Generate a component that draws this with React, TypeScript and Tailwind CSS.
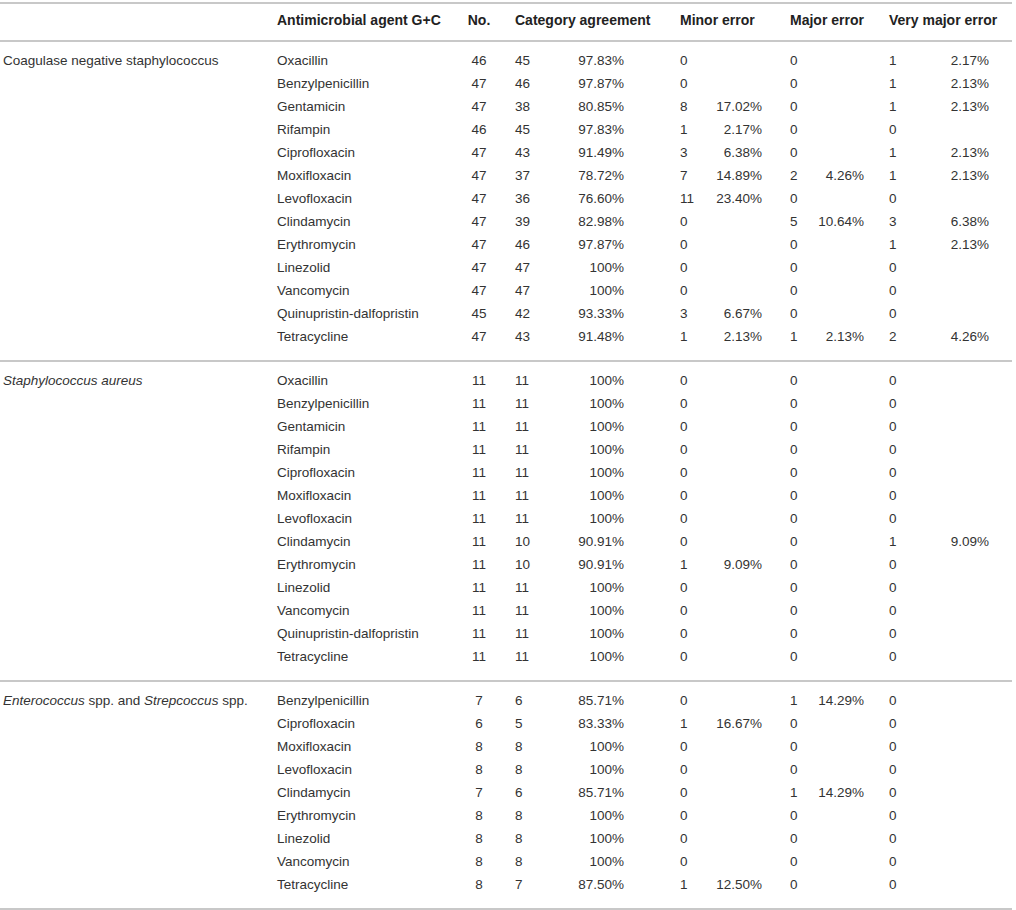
type Cell = [string, string];
type Row = {
  agent: string;
  no: string;
  cat: Cell;
  minor: Cell;
  major: Cell;
  veryMajor: Cell;
};

const r = (
  agent: string,
  no: string,
  cat: Cell,
  minor: Cell = ['0', ''],
  major: Cell = ['0', ''],
  veryMajor: Cell = ['0', '']
): Row => ({ agent, no, cat, minor, major, veryMajor });

const groups: { name: React.ReactNode; rows: Row[] }[] = [
  {
    name: 'Coagulase negative staphylococcus',
    rows: [
      r('Oxacillin', '46', ['45', '97.83%'], ['0', ''], ['0', ''], ['1', '2.17%']),
      r('Benzylpenicillin', '47', ['46', '97.87%'], ['0', ''], ['0', ''], ['1', '2.13%']),
      r('Gentamicin', '47', ['38', '80.85%'], ['8', '17.02%'], ['0', ''], ['1', '2.13%']),
      r('Rifampin', '46', ['45', '97.83%'], ['1', '2.17%'], ['0', ''], ['0', '']),
      r('Ciprofloxacin', '47', ['43', '91.49%'], ['3', '6.38%'], ['0', ''], ['1', '2.13%']),
      r('Moxifloxacin', '47', ['37', '78.72%'], ['7', '14.89%'], ['2', '4.26%'], ['1', '2.13%']),
      r('Levofloxacin', '47', ['36', '76.60%'], ['11', '23.40%'], ['0', ''], ['0', '']),
      r('Clindamycin', '47', ['39', '82.98%'], ['0', ''], ['5', '10.64%'], ['3', '6.38%']),
      r('Erythromycin', '47', ['46', '97.87%'], ['0', ''], ['0', ''], ['1', '2.13%']),
      r('Linezolid', '47', ['47', '100%']),
      r('Vancomycin', '47', ['47', '100%']),
      r('Quinupristin-dalfopristin', '45', ['42', '93.33%'], ['3', '6.67%']),
      r('Tetracycline', '47', ['43', '91.48%'], ['1', '2.13%'], ['1', '2.13%'], ['2', '4.26%']),
    ],
  },
  {
    name: <i>Staphylococcus aureus</i>,
    rows: [
      r('Oxacillin', '11', ['11', '100%']),
      r('Benzylpenicillin', '11', ['11', '100%']),
      r('Gentamicin', '11', ['11', '100%']),
      r('Rifampin', '11', ['11', '100%']),
      r('Ciprofloxacin', '11', ['11', '100%']),
      r('Moxifloxacin', '11', ['11', '100%']),
      r('Levofloxacin', '11', ['11', '100%']),
      r('Clindamycin', '11', ['10', '90.91%'], ['0', ''], ['0', ''], ['1', '9.09%']),
      r('Erythromycin', '11', ['10', '90.91%'], ['1', '9.09%']),
      r('Linezolid', '11', ['11', '100%']),
      r('Vancomycin', '11', ['11', '100%']),
      r('Quinupristin-dalfopristin', '11', ['11', '100%']),
      r('Tetracycline', '11', ['11', '100%']),
    ],
  },
  {
    name: (
      <>
        <i>Enterococcus</i> spp. and <i>Strepcoccus</i> spp.
      </>
    ),
    rows: [
      r('Benzylpenicillin', '7', ['6', '85.71%'], ['0', ''], ['1', '14.29%']),
      r('Ciprofloxacin', '6', ['5', '83.33%'], ['1', '16.67%']),
      r('Moxifloxacin', '8', ['8', '100%']),
      r('Levofloxacin', '8', ['8', '100%']),
      r('Clindamycin', '7', ['6', '85.71%'], ['0', ''], ['1', '14.29%']),
      r('Erythromycin', '8', ['8', '100%']),
      r('Linezolid', '8', ['8', '100%']),
      r('Vancomycin', '8', ['8', '100%']),
      r('Tetracycline', '8', ['7', '87.50%'], ['1', '12.50%']),
    ],
  },
];

function Pair({ cell, className }: { cell: Cell; className: string }) {
  return (
    <div className={`flex shrink-0 justify-between ${className}`}>
      <span>{cell[0]}</span>
      <span>{cell[1]}</span>
    </div>
  );
}

export default function App() {
  return (
    <div className="min-h-screen bg-white pt-[2px] font-['Liberation_Sans',Arial,sans-serif] text-[13.5px] text-[#333]">
      <div className="w-[1012px] border-t-2 border-[#c8c8c8]">
        {/* header */}
        <div className="flex border-b-2 border-[#c8c8c8] pl-[3px] pt-[9px] pb-[13px] text-[14px] font-bold leading-[14px] text-[#222] whitespace-nowrap">
          <div className="w-[274px] shrink-0"></div>
          <div className="w-[166px] shrink-0">Antimicrobial agent G+C</div>
          <div className="w-[72px] shrink-0 text-center">No.</div>
          <div className="w-[109px] shrink-0">Category agreement</div>
          <div className="ml-[56px] w-[82px] shrink-0">Minor error</div>
          <div className="ml-[28px] w-[74px] shrink-0">Major error</div>
          <div className="ml-[25px] w-[100px] shrink-0">Very major error</div>
        </div>

        {groups.map((g, gi) => (
          <div key={gi} className="flex border-b-2 border-[#c8c8c8] pl-[3px] pt-[7px] pb-[12px]">
            <div className="w-[274px] shrink-0 leading-[23px]">{g.name}</div>
            <div className="flex flex-col">
              {g.rows.map((row, ri) => (
                <div key={ri} className="flex h-[23px] items-center leading-[23px] whitespace-nowrap">
                  <div className="w-[166px] shrink-0">{row.agent}</div>
                  <div className="w-[72px] shrink-0 text-center">{row.no}</div>
                  <Pair cell={row.cat} className="w-[109px]" />
                  <Pair cell={row.minor} className="ml-[56px] w-[82px]" />
                  <Pair cell={row.major} className="ml-[28px] w-[74px]" />
                  <Pair cell={row.veryMajor} className="ml-[25px] w-[100px]" />
                </div>
              ))}
            </div>
          </div>
        ))}
      </div>
    </div>
  );
}
